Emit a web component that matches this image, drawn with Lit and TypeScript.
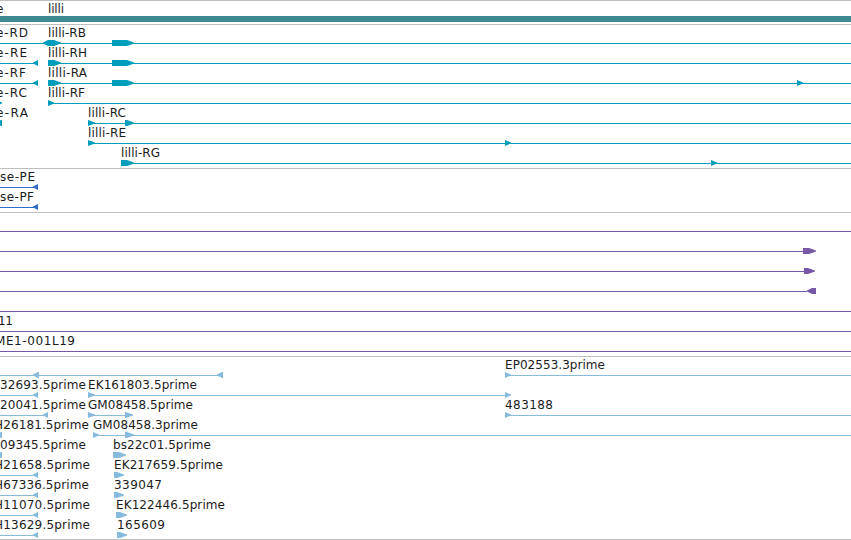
import { LitElement, html, svg, css } from 'lit';
import { customElement, property } from 'lit/decorators.js';

type Shape = 'right' | 'left' | 'both';

interface Label {
  text: string;
  x: number;
  width: number;
}

interface Row {
  labels?: Label[];
  lines?: [number, number][];
  features?: [Shape, number, number][];
}

interface Track {
  name: string;
  color: string;
  rows: Row[];
}

const VIEW_WIDTH = 851;

const label = (text: string, x: number, width: number): Label => ({ text, x, width });

const TRACKS: Track[] = [
  {
    name: 'transcripts',
    color: '#009dbc',
    rows: [
      {
        labels: [label('e-RD', -4, 32), label('lilli-RB', 48, 38)],
        lines: [[0, VIEW_WIDTH]],
        features: [['both', 43, 61], ['right', 112, 134]],
      },
      {
        labels: [label('e-RE', -4, 31), label('lilli-RH', 48, 39)],
        lines: [[0, 38], [48, VIEW_WIDTH]],
        features: [['left', 33, 38], ['right', 48, 61], ['right', 112, 134]],
      },
      {
        labels: [label('e-RF', -4, 30), label('lilli-RA', 48, 39)],
        lines: [[0, 38], [48, VIEW_WIDTH]],
        features: [['left', 33, 38], ['right', 48, 61], ['right', 112, 134], ['right', 797, 803]],
      },
      {
        labels: [label('e-RC', -4, 31), label('lilli-RF', 48, 37)],
        lines: [[48, VIEW_WIDTH]],
        features: [['right', -4, 2], ['right', 48, 54]],
      },
      {
        labels: [label('e-RA', -4, 32), label('lilli-RC', 88, 38)],
        lines: [[88, VIEW_WIDTH]],
        features: [['left', -4, 2], ['right', 88, 95], ['right', 125, 134]],
      },
      {
        labels: [label('lilli-RE', 88, 38)],
        lines: [[88, VIEW_WIDTH]],
        features: [['right', 88, 95], ['right', 505, 511]],
      },
      {
        labels: [label('lilli-RG', 121, 39)],
        lines: [[121, VIEW_WIDTH]],
        features: [['right', 121, 134], ['right', 711, 717]],
      },
    ],
  },
  {
    name: 'polypeptides',
    color: '#316bcb',
    rows: [
      { labels: [label('se-PE', 0, 35)], lines: [[0, 38]], features: [['left', 33, 38]] },
      { labels: [label('se-PF', 0, 34)], lines: [[0, 38]], features: [['left', 33, 38]] },
    ],
  },
  {
    name: 'insertions',
    color: '#7758a7',
    rows: [
      { lines: [[0, VIEW_WIDTH]] },
      { lines: [[0, 803]], features: [['right', 803, 816]] },
      { lines: [[0, 804]], features: [['right', 804, 815]] },
      { lines: [[0, 807]], features: [['left', 807, 816]] },
      { lines: [[0, VIEW_WIDTH]] },
      { labels: [label('11', -2, 15)], lines: [[0, VIEW_WIDTH]] },
      { labels: [label('ME1-001L19', -5, 80)], lines: [[0, VIEW_WIDTH]] },
    ],
  },
  {
    name: 'ests',
    color: '#87bbdd',
    rows: [
      {
        labels: [label('EP02553.3prime', 505, 100)],
        lines: [[0, 223], [505, VIEW_WIDTH]],
        features: [['left', 33, 39], ['left', 217, 223], ['right', 505, 511]],
      },
      {
        labels: [label('32693.5prime', 0, 86), label('EK161803.5prime', 88, 109)],
        lines: [[0, 38], [88, 510]],
        features: [['left', 33, 38], ['right', 88, 95], ['right', 505, 511]],
      },
      {
        labels: [
          label('20041.5prime', 0, 86),
          label('GM08458.5prime', 88, 105),
          label('483188', 505, 48),
        ],
        lines: [[0, 48], [88, 132], [505, VIEW_WIDTH]],
        features: [['left', 43, 48], ['right', 88, 95], ['right', 125, 133], ['right', 505, 511]],
      },
      {
        labels: [label('H26181.5prime', -6, 95), label('GM08458.3prime', 93, 105)],
        lines: [[93, VIEW_WIDTH]],
        features: [['left', -4, 2], ['right', 93, 99], ['right', 125, 134]],
      },
      {
        labels: [label('09345.5prime', 0, 86), label('bs22c01.5prime', 113, 98)],
        features: [['left', -4, 2], ['right', 113, 126]],
      },
      {
        labels: [label('H21658.5prime', -6, 96), label('EK217659.5prime', 114, 109)],
        lines: [[0, 38]],
        features: [['left', 33, 38], ['right', 114, 124]],
      },
      {
        labels: [label('H67336.5prime', -6, 95), label('339047', 114, 48)],
        lines: [[0, 38]],
        features: [['left', 33, 38], ['right', 114, 124]],
      },
      {
        labels: [label('H11070.5prime', -6, 96), label('EK122446.5prime', 116, 109)],
        lines: [[0, 38]],
        features: [['left', 33, 38], ['right', 116, 127]],
      },
      {
        labels: [label('H13629.5prime', -6, 96), label('165609', 117, 48)],
        lines: [[0, 38]],
        features: [['left', 33, 38], ['right', 117, 127]],
      },
    ],
  },
];

// Outline of a feature, 6px high, with its tip at the strand's end.
function featurePoints(shape: Shape, start: number, end: number): string {
  const tip = Math.min(7, end - start);
  const right = `${end - tip},14 ${end},16.6 ${end},17.4 ${end - tip},20`;
  if (shape === 'right') {
    return `${start},14 ${right} ${start},20`;
  }
  if (shape === 'left') {
    const neck = start + Math.min(5, end - start);
    return `${end},14 ${neck},14 ${start},16.6 ${start},17.4 ${neck},20 ${end},20`;
  }
  return `${start},16.6 ${start + 5},14 ${right} ${start + 5},20 ${start},17.4`;
}

const labelStyles = css`
  .label {
    font-family: 'DejaVu Sans', sans-serif;
    font-size: 12px;
    fill: #1c1c1c;
  }
`;

@customElement('track-row')
export class TrackRow extends LitElement {
  @property({ attribute: false }) row: Row = {};
  @property() color = '#000';

  static styles = [
    labelStyles,
    css`
      :host {
        display: block;
        height: 20px;
      }

      svg {
        display: block;
        overflow: hidden;
      }
    `,
  ];

  render() {
    const { labels = [], lines = [], features = [] } = this.row;
    return html`
      <svg width=${VIEW_WIDTH} height="20">
        ${lines.map(([from, to]) => svg`
          <rect x=${from} y="17" width=${to - from} height="1" fill=${this.color}></rect>
        `)}
        ${features.map(([shape, start, end]) => svg`
          <polygon points=${featurePoints(shape, start, end)} fill=${this.color}></polygon>
        `)}
        ${labels.map((l) => svg`
          <text class="label" x=${l.x} y="11" textLength=${l.width}>${l.text}</text>
        `)}
      </svg>
    `;
  }
}

@customElement('app-root')
export class AppRoot extends LitElement {
  static styles = [
    labelStyles,
    css`
      :host {
        display: block;
        width: 851px;
        height: 540px;
        overflow: hidden;
        background: #fff;
      }

      .track {
        box-sizing: border-box;
        border-top: 1px solid #bebebe;
        padding: 1px 0 2px;
      }

      .track:last-child {
        border-bottom: 1px solid #bebebe;
        padding-bottom: 1px;
      }

      .gene {
        height: 24px;
        padding: 0;
      }

      .gene svg {
        display: block;
      }

      .span {
        fill: #3d8b91;
      }
    `,
  ];

  render() {
    return html`
      <section class="track gene">
        <svg width=${VIEW_WIDTH} height="23">
          <text class="label" x="-4" y="12">e</text>
          <text class="label" x="48" y="12" textLength="16">lilli</text>
          <rect class="span" x="0" y="15" width=${VIEW_WIDTH} height="6"></rect>
        </svg>
      </section>
      ${TRACKS.map((track) => html`
        <section class="track">
          ${track.rows.map((row) => html`
            <track-row .row=${row} color=${track.color}></track-row>
          `)}
        </section>
      `)}
    `;
  }
}
